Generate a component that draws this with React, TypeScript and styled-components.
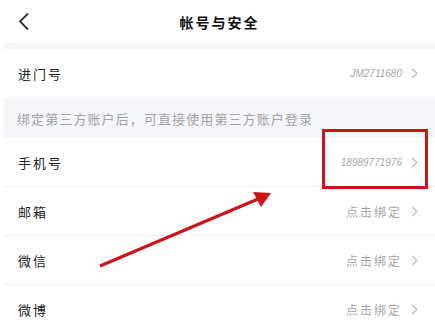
import styled, { createGlobalStyle } from 'styled-components';

const GlobalStyle = createGlobalStyle`
  html, body {
    margin: 0;
    padding: 0;
    background: #ffffff;
    font-family: "Noto Sans CJK SC", "Noto Sans", sans-serif;
  }
`;

const Page = styled.div`
  position: relative;
  width: 435px;
  height: 333px;
  overflow: hidden;
  background: #ffffff;
`;

const Header = styled.div`
  position: relative;
  height: 43px;
  display: flex;
  align-items: center;
  justify-content: center;
`;

const BackButton = styled.div`
  position: absolute;
  left: 17px;
  top: 12px;
  width: 14px;
  height: 19px;
  display: flex;
`;

const Title = styled.h1`
  margin: 0;
  font-size: 14px;
  font-weight: 700;
  color: #111111;
  letter-spacing: 2px;
  padding-left: 4px;
`;

const Body = styled.div`
  margin-left: 4px;
`;

const Band = styled.div<{ $h: number }>`
  height: ${(p) => p.$h}px;
  background: #f5f6f9;
  display: flex;
  align-items: center;
  padding-left: 13px;
  font-size: 13px;
  color: #a3a3a3;
  letter-spacing: 1.1px;
`;

const Row = styled.div<{ $divider?: boolean }>`
  height: 48px;
  display: flex;
  align-items: center;
  justify-content: space-between;
  padding: 0 17px 0 14px;
  border-bottom: 1px solid ${(p) => (p.$divider ? '#f1f1f3' : 'transparent')};
`;

const Label = styled.span`
  font-size: 13px;
  color: #222222;
  letter-spacing: 2px;
`;

const Value = styled.span<{ $mono?: boolean }>`
  display: flex;
  align-items: center;
  gap: 9px;
  color: #a6a6a6;
  font-size: ${(p) => (p.$mono ? '10px' : '12px')};
  font-style: ${(p) => (p.$mono ? 'italic' : 'normal')};
  font-family: ${(p) =>
    p.$mono ? '"Liberation Sans", sans-serif' : '"Noto Sans CJK SC", sans-serif'};
  letter-spacing: ${(p) => (p.$mono ? '0' : '2px')};
`;

const Highlight = styled.div`
  position: absolute;
  left: 322px;
  top: 129px;
  width: 106px;
  height: 60px;
  box-sizing: border-box;
  border: 3px solid #cc1418;
  pointer-events: none;
`;

const ArrowLayer = styled.svg`
  position: absolute;
  left: 0;
  top: 0;
  pointer-events: none;
`;

const Chevron = () => (
  <svg width="7" height="11" viewBox="0 0 7 11">
    <path d="M1 1 L6 5.5 L1 10" fill="none" stroke="#b5b5b5" strokeWidth="1.1" />
  </svg>
);

const rows = [
  { label: '手机号', value: '18989771976', mono: true },
  { label: '邮箱', value: '点击绑定' },
  { label: '微信', value: '点击绑定' },
  { label: '微博', value: '点击绑定' },
];

export default function App() {
  return (
    <Page>
      <GlobalStyle />
      <Header>
        <BackButton>
          <svg width="14" height="19" viewBox="0 0 14 19">
            <path d="M11 1.5 L3 9.5 L11 17.5" fill="none" stroke="#333" strokeWidth="1.8" />
          </svg>
        </BackButton>
        <Title>帐号与安全</Title>
      </Header>
      <Body>
        <Band $h={6} />
        <Row>
          <Label>进门号</Label>
          <Value $mono>
            JM2711680
            <Chevron />
          </Value>
        </Row>
        <Band $h={40}>绑定第三方账户后，可直接使用第三方账户登录</Band>
        {rows.map((r) => (
          <Row key={r.label} $divider>
            <Label>{r.label}</Label>
            <Value $mono={r.mono}>
              {r.value}
              <Chevron />
            </Value>
          </Row>
        ))}
      </Body>
      <Highlight />
      <ArrowLayer width="435" height="333" viewBox="0 0 435 333">
        <line x1="100" y1="266" x2="258" y2="199" stroke="#cc1418" strokeWidth="3" />
        <polygon points="271,193 253,192 261,207" fill="#cc1418" />
      </ArrowLayer>
    </Page>
  );
}
